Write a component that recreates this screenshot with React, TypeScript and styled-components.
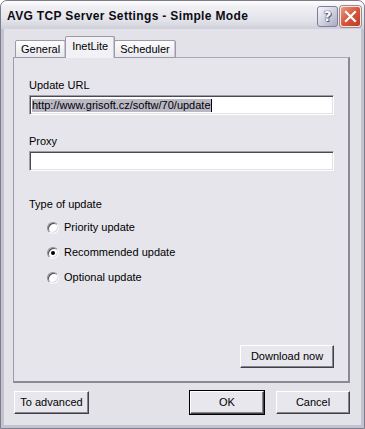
import { FC } from 'react';
import styled, { createGlobalStyle } from 'styled-components';

const GlobalStyle = createGlobalStyle`
  body {
    margin: 0;
    background: #ffffff;
  }
`;

const uiFont = `'Liberation Sans', Arial, sans-serif`;

interface RadioProps {
  label: string;
  checked?: boolean;
}

const RadioOption: FC<RadioProps> = ({ label, checked }) => (
  <RadioRow>
    <RadioCircle>{checked && <RadioDot />}</RadioCircle>
    <span>{label}</span>
  </RadioRow>
);

const App: FC = () => {
  return (
    <>
      <GlobalStyle />
      <Window>
        <TitleBar>
          <Title>AVG TCP Server Settings - Simple Mode</Title>
          <CaptionButtons>
            <HelpBtn>?</HelpBtn>
            <CloseBtn>
              <svg width='13' height='13' viewBox='0 0 13 13'>
                <path
                  d='M2 2 L11 11 M11 2 L2 11'
                  stroke='#ffffff'
                  strokeWidth='2.2'
                  strokeLinecap='square'
                />
              </svg>
            </CloseBtn>
          </CaptionButtons>
        </TitleBar>

        <Body>
          <Tabs>
            <Tab>General</Tab>
            <Tab $active>InetLite</Tab>
            <Tab>Scheduler</Tab>
          </Tabs>

          <Panel>
            <Label>Update URL</Label>
            <TextBox>
              <Selected>http://www.grisoft.cz/softw/70/update</Selected>
              <Caret />
            </TextBox>

            <Label $top={20}>Proxy</Label>
            <TextBox />

            <Label $top={27}>Type of update</Label>
            <RadioGroup>
              <RadioOption label='Priority update' />
              <RadioOption label='Recommended update' checked />
              <RadioOption label='Optional update' />
            </RadioGroup>

            <PanelActions>
              <Button $width={94}>Download now</Button>
            </PanelActions>
          </Panel>

          <Footer>
            <Button $width={75}>To advanced</Button>
            <FooterRight>
              <Button $width={74} $default>
                OK
              </Button>
              <Button $width={74}>Cancel</Button>
            </FooterRight>
          </Footer>
        </Body>
      </Window>
    </>
  );
};

const Window = styled.div`
  width: 365px;
  height: 429px;
  box-sizing: border-box;
  display: flex;
  flex-direction: column;
  background: #c3c3d0;
  border: 1px solid #7d7d8e;
  border-radius: 7px 7px 0 0;
  overflow: hidden;
  font-family: ${uiFont};
  font-size: 11px;
  color: #000;
`;

const TitleBar = styled.div`
  height: 28px;
  flex-shrink: 0;
  display: flex;
  align-items: center;
  justify-content: space-between;
  padding: 0 3px 0 6px;
  background: linear-gradient(
    #fefefe 0%,
    #f0f0f4 20%,
    #e2e2e9 70%,
    #cfcfda 100%
  );
`;

const Title = styled.div`
  font-family: ${uiFont};
  font-weight: bold;
  font-size: 12px;
  letter-spacing: 0.35px;
  color: #0c0c14;
  margin-top: 1px;
`;

const CaptionButtons = styled.div`
  display: flex;
  gap: 2px;
  margin-top: 2px;
`;

const CaptionBtn = styled.div`
  width: 21px;
  height: 21px;
  box-sizing: border-box;
  border-radius: 3px;
  display: flex;
  align-items: center;
  justify-content: center;
`;

const HelpBtn = styled(CaptionBtn)`
  border: 1px solid #7e7e98;
  background: linear-gradient(135deg, #f6f6fb 0%, #cfcfe0 55%, #a9a9c2 100%);
  color: #ffffff;
  font-family: 'DejaVu Sans', sans-serif;
  font-weight: bold;
  font-size: 14px;
  text-shadow: 0 0 1px #3c3c52, 0 0 1px #3c3c52, 1px 1px 0 #5e5e78;
`;

const CloseBtn = styled(CaptionBtn)`
  border: 1px solid #f2ece8;
  background: linear-gradient(135deg, #ec9a84 0%, #d8563c 50%, #bd3a22 100%);
  box-shadow: 0 0 0 1px #a8898a;
`;

const Body = styled.div`
  flex: 1;
  display: flex;
  flex-direction: column;
  margin: 0 3px 3px 3px;
  padding: 8px 11px 11px 9px;
  background: #e3e2e8;
`;

const Tabs = styled.div`
  display: flex;
  align-items: flex-end;
  height: 21px;
  padding-left: 2px;
  position: relative;
  z-index: 1;
  margin-bottom: -1px;
`;

const Tab = styled.div<{ $active?: boolean }>`
  box-sizing: border-box;
  height: ${({ $active }) => ($active ? '22px' : '18px')};
  padding: ${({ $active }) => ($active ? '2px 6px 0' : '2px 5px 0')};
  margin: ${({ $active }) => ($active ? '0 -1px' : '0')};
  border: 1px solid #9b9aa6;
  border-bottom: ${({ $active }) => ($active ? 'none' : '1px solid #9b9aa6')};
  border-radius: 2px 2px 0 0;
  background: ${({ $active }) =>
    $active ? '#f2f1f5' : 'linear-gradient(#fdfdfe, #e8e7ee)'};
  position: relative;
  z-index: ${({ $active }) => ($active ? 2 : 1)};
  line-height: 13px;
  display: flex;
  align-items: ${({ $active }) => ($active ? 'flex-start' : 'center')};
  padding-top: ${({ $active }) => ($active ? '3px' : '1px')};
  box-shadow: inset -1px 0 0 #c9c8d2;
`;

const Panel = styled.div`
  flex: 1;
  display: flex;
  flex-direction: column;
  padding: 21px 14px 13px 15px;
  background: #e6e5eb;
  border: 1px solid #9b9aa6;
  border-right: 2px solid #8a8995;
  border-bottom: 2px solid #8a8995;
  border-top-color: #a9a8b3;
`;

const Label = styled.div<{ $top?: number }>`
  line-height: 13px;
  margin-top: ${({ $top }) => $top ?? 0}px;
  margin-bottom: 3px;
`;

const TextBox = styled.div`
  height: 20px;
  box-sizing: border-box;
  display: flex;
  align-items: center;
  padding: 0 2px;
  background: #ffffff;
  border-top: 1px solid #9e9ea6;
  border-left: 1px solid #9e9ea6;
  border-bottom: 1px solid #ffffff;
  border-right: 1px solid #ffffff;
  box-shadow: inset 1px 1px 0 #4a4a52, inset -1px -1px 0 #e2e1e6;
  line-height: 13px;
`;

const Selected = styled.span`
  background: #b9b8c4;
  color: #000;
`;

const Caret = styled.span`
  display: inline-block;
  width: 1px;
  height: 13px;
  background: #000;
`;

const RadioGroup = styled.div`
  display: flex;
  flex-direction: column;
  gap: 12px;
  margin-top: 7px;
  padding-left: 18px;
`;

const RadioRow = styled.div`
  display: flex;
  align-items: center;
  gap: 5px;
  line-height: 13px;
`;

const RadioCircle = styled.div`
  width: 12px;
  height: 12px;
  box-sizing: border-box;
  border-radius: 50%;
  background: #ffffff;
  border: 1px solid;
  border-color: #8e8e96 #f6f6f8 #f6f6f8 #8e8e96;
  box-shadow: inset 1px 1px 0 #4c4c54, inset -1px -1px 0 #dcdbe2;
  display: flex;
  align-items: center;
  justify-content: center;
`;

const RadioDot = styled.div`
  width: 4px;
  height: 4px;
  border-radius: 50%;
  background: #000;
`;

const PanelActions = styled.div`
  margin-top: auto;
  display: flex;
  justify-content: flex-end;
`;

const Button = styled.div<{ $width: number; $default?: boolean }>`
  width: ${({ $width }) => $width}px;
  height: 23px;
  box-sizing: border-box;
  display: flex;
  align-items: center;
  justify-content: center;
  background: #e8e7ed;
  border-top: 1px solid #ffffff;
  border-left: 1px solid #ffffff;
  border-right: 1px solid #404048;
  border-bottom: 1px solid #404048;
  box-shadow: inset -1px -1px 0 #85848e;
  outline: ${({ $default }) => ($default ? '1px solid #000' : 'none')};
  line-height: 13px;
`;

const Footer = styled.div`
  display: flex;
  justify-content: space-between;
  align-items: center;
  margin-top: 8px;
  padding-left: 1px;
`;

const FooterRight = styled.div`
  display: flex;
  gap: 12px;
`;

export default App;
